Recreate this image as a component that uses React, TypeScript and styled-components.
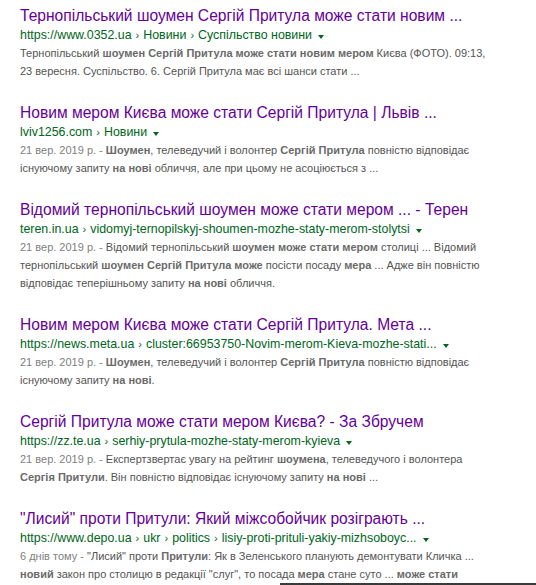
import React from "react"
import styled, { createGlobalStyle } from "styled-components"

type Part = { text: string; b?: boolean }

type Result = {
    title: string
    url: string[]
    date?: string
    snippet: Part[]
}

const results: Result[] = [
    {
        title: "Тернопільський шоумен Сергій Притула може стати новим ...",
        url: ["https://www.0352.ua", "Новини", "Суспільство новини"],
        snippet: [
            { text: "Тернопільський " },
            { text: "шоумен Сергій Притула може стати новим", b: true },
            { text: " " },
            { text: "мером", b: true },
            { text: " Києва (ФОТО). 09:13, 23 вересня. Суспільство. 6. Сергій Притула має всі шанси стати ..." },
        ],
    },
    {
        title: "Новим мером Києва може стати Сергій Притула | Львів ...",
        url: ["lviv1256.com", "Новини"],
        date: "21 вер. 2019 р. - ",
        snippet: [
            { text: "Шоумен", b: true },
            { text: ", телеведучий і волонтер " },
            { text: "Сергій Притула", b: true },
            { text: " повністю відповідає існуючому запиту " },
            { text: "на нові", b: true },
            { text: " обличчя, але при цьому не асоціюється з ..." },
        ],
    },
    {
        title: "Відомий тернопільський шоумен може стати мером ... - Терен",
        url: ["teren.in.ua", "vidomyj-ternopilskyj-shoumen-mozhe-staty-merom-stolytsi"],
        date: "21 вер. 2019 р. - ",
        snippet: [
            { text: "Відомий тернопільський " },
            { text: "шоумен може стати мером", b: true },
            { text: " столиці ... Відомий тернопільський " },
            { text: "шоумен Сергій Притула може", b: true },
            { text: " посісти посаду " },
            { text: "мера", b: true },
            { text: " ... Адже він повністю відповідає теперішньому запиту " },
            { text: "на нові", b: true },
            { text: " обличчя." },
        ],
    },
    {
        title: "Новим мером Києва може стати Сергій Притула. Мета ...",
        url: ["https://news.meta.ua", "cluster:66953750-Novim-merom-Kieva-mozhe-stati..."],
        date: "21 вер. 2019 р. - ",
        snippet: [
            { text: "Шоумен", b: true },
            { text: ", телеведучий і волонтер " },
            { text: "Сергій Притула", b: true },
            { text: " повністю відповідає існуючому запиту " },
            { text: "на нові", b: true },
            { text: "." },
        ],
    },
    {
        title: "Сергій Притула може стати мером Києва? - За Збручем",
        url: ["https://zz.te.ua", "serhiy-prytula-mozhe-staty-merom-kyieva"],
        date: "21 вер. 2019 р. - ",
        snippet: [
            { text: "Експертзвертає увагу на рейтинг " },
            { text: "шоумена", b: true },
            { text: ", телеведучого і волонтера " },
            { text: "Сергія Притули", b: true },
            { text: ". Він повністю відповідає існуючому запиту " },
            { text: "на нові", b: true },
            { text: " ..." },
        ],
    },
    {
        title: "\"Лисий\" проти Притули: Який міжсобойчик розіграють ...",
        url: ["https://www.depo.ua", "ukr", "politics", "lisiy-proti-prituli-yakiy-mizhsoboyc..."],
        date: "6 днів тому - ",
        snippet: [
            { text: "\"Лисий\" проти " },
            { text: "Притули", b: true },
            { text: ": Як в Зеленського планують демонтувати Кличка ... " },
            { text: "новий", b: true },
            { text: " закон про столицю в редакції \"слуг\", то посада " },
            { text: "мера", b: true },
            { text: " стане суто ... " },
            { text: "може стати", b: true },
        ],
    },
]

const GlobalStyle = createGlobalStyle`
    html, body {
        margin: 0;
        padding: 0;
        background: #ffffff;
    }
    body {
        font-family: "Liberation Sans", Arial, sans-serif;
        overflow: hidden;
    }
`

const Page = styled.div`
    position: relative;
    width: 536px;
    height: 585px;
    overflow: hidden;
    padding: 5px 0 0 20px;
    box-sizing: border-box;
`

const Item = styled.div`
    margin-bottom: 22px;
    width: 475px;
`

const Title = styled.a`
    display: block;
    font-size: 15.6px;
    line-height: 22px;
    color: #660099;
    text-decoration: none;
    white-space: nowrap;
`

const Url = styled.div`
    display: flex;
    align-items: center;
    font-size: 12.4px;
    line-height: 17px;
    color: #006621;
    white-space: nowrap;
`

const Sep = styled.span`
    margin: 0 4px;
    font-size: 11px;
`

const Arrow = styled.span`
    display: inline-block;
    margin-left: 6px;
    margin-top: 2px;
    border-top: 4px solid #006621;
    border-left: 3px solid transparent;
    border-right: 3px solid transparent;
`

const Snippet = styled.div`
    font-size: 11px;
    line-height: 18px;
    color: #545454;
`

const Date = styled.span`
    color: #808080;
`

const Strong = styled.b`
    color: #6a6a6a;
    font-weight: bold;
`

const EdgeLine = styled.div`
    position: absolute;
    left: 280px;
    right: 0;
    bottom: 0;
    height: 2px;
    background: #3a3a3a;
`

export default function App() {
    return (
        <>
            <GlobalStyle />
            <Page>
                {results.map((r, i) => (
                    <Item key={i}>
                        <Title>{r.title}</Title>
                        <Url>
                            {r.url.map((u, j) => (
                                <React.Fragment key={j}>
                                    {j > 0 && <Sep>›</Sep>}
                                    <span>{u}</span>
                                </React.Fragment>
                            ))}
                            <Arrow />
                        </Url>
                        <Snippet>
                            {r.date && <Date>{r.date}</Date>}
                            {r.snippet.map((p, j) =>
                                p.b ? <Strong key={j}>{p.text}</Strong> : <span key={j}>{p.text}</span>
                            )}
                        </Snippet>
                    </Item>
                ))}
                <EdgeLine />
            </Page>
        </>
    )
}
